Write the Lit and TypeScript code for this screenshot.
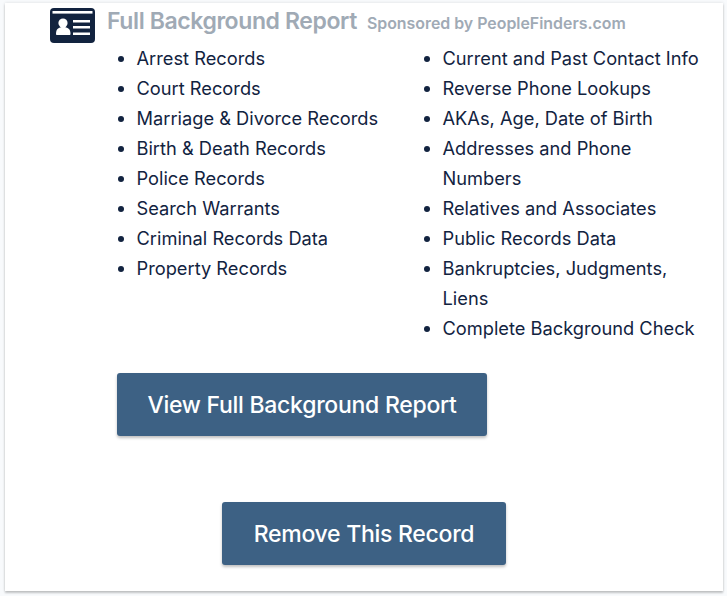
import { LitElement, html, css } from 'lit';
import { customElement } from 'lit/decorators.js';

const LEFT = [
  'Arrest Records',
  'Court Records',
  'Marriage & Divorce Records',
  'Birth & Death Records',
  'Police Records',
  'Search Warrants',
  'Criminal Records Data',
  'Property Records',
];

const RIGHT = [
  'Current and Past Contact Info',
  'Reverse Phone Lookups',
  'AKAs, Age, Date of Birth',
  'Addresses and Phone Numbers',
  'Relatives and Associates',
  'Public Records Data',
  'Bankruptcies, Judgments, Liens',
  'Complete Background Check',
];

@customElement('app-root')
export class AppRoot extends LitElement {
  static styles = css`
    :host {
      display: block;
      height: 596px;
      box-sizing: border-box;
      padding: 3px 4px 5px 5px;
      background: #f8fafc;
      font-family: Inter, 'Liberation Sans', sans-serif;
      overflow: hidden;
    }
    * {
      box-sizing: border-box;
      margin: 0;
      padding: 0;
    }
    .card {
      height: 100%;
      background: #fff;
      box-shadow: 0 2px 2px rgba(0, 0, 0, 0.2), 0 0 3px rgba(0, 0, 0, 0.12);
      padding: 5px 0 0 45px;
    }
    .head {
      display: flex;
      align-items: flex-start;
      height: 35px;
    }
    .id-icon {
      width: 45px;
      height: 35px;
      flex: none;
      margin-right: 12px;
    }
    .title {
      font-size: 23px;
      line-height: 26px;
      font-weight: 600;
      color: #a0aab5;
      letter-spacing: -0.4px;
      margin-right: 10px;
    }
    .sponsor {
      font-size: 15.9px;
      line-height: 32px;
      font-weight: 600;
      color: #a0aab5;
    }
    .lists {
      display: grid;
      grid-template-columns: 306px 262px;
      padding-left: 86.5px;
    }
    ul {
      list-style: disc;
      font-size: 18.25px;
      line-height: 30px;
      color: #12233f;
    }
    .actions {
      padding: 30px 0 0 67px;
    }
    .btn {
      display: block;
      border: 0;
      border-radius: 3px;
      padding-top: 2px;
      background: #3d6184;
      color: #fff;
      font: 500 23px/27px Inter, 'Liberation Sans', sans-serif;
      letter-spacing: -0.27px;
      box-shadow: 0 2px 3px rgba(0, 0, 0, 0.25);
    }
    .view {
      width: 370px;
      height: 63px;
    }
    .remove {
      width: 284px;
      height: 63px;
      margin: 66px 0 0 105px;
    }
  `;

  render() {
    return html`
      <div class="card">
        <div class="head">
          <svg class="id-icon" viewBox="0 0 45 35">
            <rect width="45" height="35" rx="4" fill="#12233f"></rect>
            <rect x="2.5" y="3" width="40" height="2.6" fill="#fff"></rect>
            <circle cx="13" cy="15" r="4.6" fill="#fff"></circle>
            <path d="M6 26c0-5 2.5-7 7.2-7s7.3 2 7.3 7c0 .8-.5 1-1 1H7c-.5 0-1-.2-1-1z" fill="#fff"></path>
            <path d="M23 12h17v2.4H23zM23 18h17v2.4H23zM23 24.5h17v2.4H23z" fill="#fff"></path>
          </svg>
          <span class="title">Full Background Report</span>
          <span class="sponsor">Sponsored by PeopleFinders.com</span>
        </div>
        <div class="lists">
          <ul>${LEFT.map((t) => html`<li>${t}</li>`)}</ul>
          <ul>${RIGHT.map((t) => html`<li>${t}</li>`)}</ul>
        </div>
        <div class="actions">
          <button class="btn view">View Full Background Report</button>
          <button class="btn remove">Remove This Record</button>
        </div>
      </div>
    `;
  }
}
